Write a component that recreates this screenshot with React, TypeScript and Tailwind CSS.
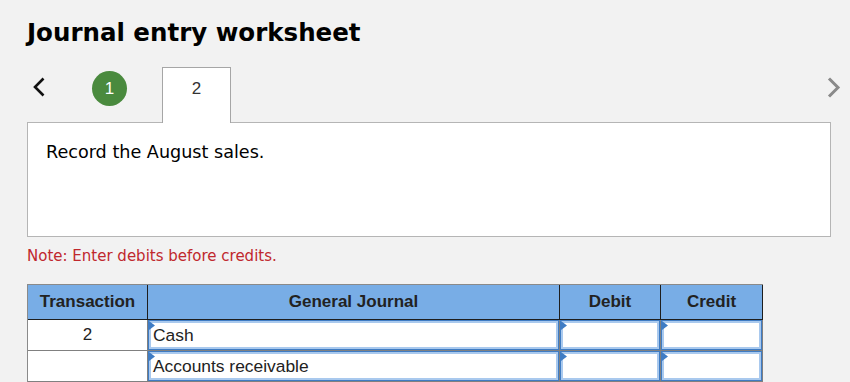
import React from 'react';

const verdana = { fontFamily: '"DejaVu Sans", Verdana, sans-serif' };
const arial = { fontFamily: '"Liberation Sans", Arial, sans-serif' };

// Blue flag in the top-left corner of an entry cell
const Flag: React.FC = () => (
  <svg className="absolute left-0 top-0" width="6" height="9" viewBox="0 0 6 9">
    <polygon points="0,0 6,4.5 0,9" fill="#3f7cc4" />
  </svg>
);

const EntryCell: React.FC<{ text?: string }> = ({ text }) => (
  <div className="border-r border-b border-[#808080] bg-white">
    <div className="relative h-[30px] border border-[#3f7cc4] shadow-[inset_0_0_0_2px_#a9c9ee] pl-[4px] text-[17.4px] leading-[28px] text-[#222]" style={arial}>
      <Flag />
      {text}
    </div>
  </div>
);

const App: React.FC = () => {
  return (
    <div className="w-[850px] h-[382px] overflow-hidden bg-[#f2f2f2] pl-[27px] pr-[19px] pt-[18px]">
      <h1 className="text-[24.5px] leading-[30px] font-bold text-black" style={verdana}>
        Journal entry worksheet
      </h1>

      {/* step navigation */}
      <div className="mt-[19px] flex items-start h-[55px]">
        <div className="mt-[10px] ml-[6px] w-[12px]">
          <svg width="12" height="20" viewBox="0 0 12 20">
            <polyline points="10.5,1.5 2,10 10.5,18.5" fill="none" stroke="#111" strokeWidth="2.6" />
          </svg>
        </div>
        <div
          className="ml-[47px] mt-[4px] w-[35px] h-[35px] rounded-full bg-[#4a8a3e] flex items-center justify-center text-white text-[17px]"
          style={arial}
        >
          1
        </div>
        <div
          className="relative z-10 ml-[35px] w-[69px] h-[56px] bg-white border border-b-0 border-[#a6a6a6] flex justify-center pt-[9px] text-[17px] leading-[24px] text-[#333]"
          style={arial}
        >
          2
        </div>
        <div className="ml-auto mr-[-10px] mt-[10px]">
          <svg width="14" height="21" viewBox="0 0 14 21">
            <polyline points="2,1.5 11,10.5 2,19.5" fill="none" stroke="#8a8a8a" strokeWidth="3" />
          </svg>
        </div>
      </div>

      {/* question box */}
      <div className="h-[115px] border border-[#b5b5b5] bg-white pl-[18px] pt-[17px]">
        <p className="text-[17.6px] leading-[24px] text-black" style={verdana}>
          Record the August sales.
        </p>
      </div>

      <p className="mt-[9px] text-[15px] leading-[20px] text-[#c0282d]" style={verdana}>
        Note: Enter debits before credits.
      </p>

      {/* journal table */}
      <div className="mt-[18px] w-[736px] border-t border-l border-[#8a8a8a]">
        <div className="grid grid-cols-[120px_412px_101px_102px] text-[17px] text-[#222]" style={arial}>
          <div className="h-[35px] bg-[#78ade6] border-r border-b border-[#1e1e1e] flex items-center justify-center font-bold">Transaction</div>
          <div className="h-[35px] bg-[#78ade6] border-r border-b border-[#1e1e1e] flex items-center justify-center font-bold">General Journal</div>
          <div className="h-[35px] bg-[#78ade6] border-r border-b border-[#1e1e1e] flex items-center justify-center font-bold">Debit</div>
          <div className="h-[35px] bg-[#78ade6] border-r border-b border-[#1e1e1e] flex items-center justify-center font-bold">Credit</div>

          <div className="h-[31px] bg-white border-r border-b border-[#808080] flex items-center justify-center">2</div>
          <EntryCell text="Cash" />
          <EntryCell />
          <EntryCell />

          <div className="h-[31px] bg-white border-r border-b border-[#808080]" />
          <EntryCell text="Accounts receivable" />
          <EntryCell />
          <EntryCell />
        </div>
      </div>
    </div>
  );
};

export default App;
